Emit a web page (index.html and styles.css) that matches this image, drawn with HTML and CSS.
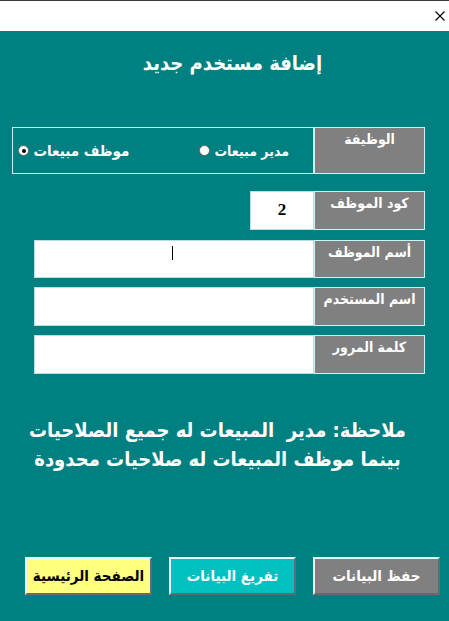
FILE: index.html
```html
<!DOCTYPE html>
<html lang="ar" dir="rtl">
<head>
<meta charset="utf-8">
<title>إضافة مستخدم جديد</title>
<link rel="stylesheet" href="styles.css">
</head>
<body>
<div class="titlebar">
  <svg class="close" width="12" height="12" viewBox="0 0 12 12"><path d="M1.5 1.5 L10.5 10.5 M10.5 1.5 L1.5 10.5" stroke="#000" stroke-width="1.2" fill="none"/></svg>
</div>
<main class="panel">
  <h1 class="title">إضافة مستخدم جديد</h1>
  <div class="rows">
    <div class="row row-role">
      <div class="label">الوظيفة</div>
      <div class="radios">
        <label class="radio"><span class="dot"></span>مدير مبيعات</label>
        <label class="radio radio-2"><span class="dot checked"></span>موظف مبيعات</label>
      </div>
    </div>
    <div class="row row-code">
      <div class="label">كود الموظف</div>
      <div class="field field-code">2</div>
    </div>
    <div class="row row-name">
      <div class="label">أسم الموظف</div>
      <div class="field field-wide"><span class="caret"></span></div>
    </div>
    <div class="row row-user">
      <div class="label">اسم المستخدم</div>
      <div class="field field-wide"></div>
    </div>
    <div class="row row-pass">
      <div class="label">كلمة المرور</div>
      <div class="field field-wide"></div>
    </div>
  </div>
  <p class="note">ملاحظة: مدير&nbsp; المبيعات له جميع الصلاحيات<br>بينما موظف المبيعات له صلاحيات محدودة</p>
  <div class="buttons">
    <div class="btn btn-save">حفظ البيانات</div>
    <div class="btn btn-clear">تفريغ البيانات</div>
    <div class="btn btn-home">الصفحة الرئيسية</div>
  </div>
</main>
</body>
</html>
```

FILE: styles.css
```css
html, body {
  margin: 0;
  padding: 0;
}
body {
  width: 449px;
  height: 621px;
  overflow: hidden;
  font-family: "DejaVu Sans Condensed", "DejaVu Sans", sans-serif;
  background: #008080;
}
.titlebar {
  height: 30px;
  background: #fff;
  border-top: 1px solid #3a3a3a;
  display: flex;
  align-items: center;
  padding-right: 3px;
}
.close {
  display: block;
}
.panel {
  padding: 17px 24px 0 24px;
  color: #fff;
}
.title {
  margin: 0;
  font-size: 20px;
  line-height: 30px;
  font-weight: bold;
  text-align: center;
  padding-left: 16px;
  white-space: nowrap;
}
.rows {
  margin-top: 49px;
  display: flex;
  flex-direction: column;
}
.row {
  display: flex;
}
.label {
  width: 111px;
  background: #808080;
  border: 1px solid #c8f4f4;
  font-size: 14px;
  font-weight: bold;
  text-align: center;
  padding-top: 3px;
  box-sizing: border-box;
  white-space: nowrap;
}
.row-role { height: 47px; margin-bottom: 17px; }
.row-code { height: 39px; margin-bottom: 10px; }
.row-name { height: 38px; margin-bottom: 9px; }
.row-user { height: 39px; margin-bottom: 9px; }
.row-pass { height: 39px; }
.radios {
  width: 302px;
  border: 1px solid #c8f4f4;
  box-sizing: border-box;
  display: flex;
  align-items: center;
  padding-right: 24px;
  gap: 70px;
  margin-left: -14px;
}
.radio {
  display: flex;
  align-items: center;
  gap: 4px;
  font-size: 14px;
  font-weight: bold;
  white-space: nowrap;
}
.radio-2 {
  font-size: 15px;
}
.dot {
  order: 2;
  width: 11px;
  height: 11px;
  border-radius: 50%;
  background: #fff;
  border: 1px solid #666;
  box-sizing: border-box;
  display: flex;
  align-items: center;
  justify-content: center;
}
.dot.checked::after {
  content: "";
  width: 4px;
  height: 4px;
  border-radius: 50%;
  background: #000;
}
.field {
  background: #fff;
  border: 1px solid #b8dce8;
  box-sizing: border-box;
  color: #000;
}
.field-code {
  width: 64px;
  font-family: "Liberation Serif", serif;
  font-weight: bold;
  font-size: 17px;
  text-align: center;
  padding-top: 8px;
}
.field-wide {
  width: 280px;
  text-align: center;
  padding-top: 4px;
}
.caret {
  display: inline-block;
  width: 1px;
  height: 14px;
  background: #000;
  margin-right: 4px;
}
.note {
  margin: 42px 0 0 -14px;
  font-size: 20px;
  line-height: 29px;
  font-weight: bold;
  text-align: center;
  white-space: nowrap;
}
.buttons {
  margin: 83px -15px 0 0;
  display: flex;
  gap: 17px;
}
.btn {
  width: 127px;
  height: 38px;
  box-sizing: border-box;
  display: flex;
  align-items: center;
  justify-content: center;
  font-size: 15px;
  font-weight: bold;
  border: 2px solid;
  border-color: #e8f8f8 #5a7070 #5a7070 #e8f8f8;
  white-space: nowrap;
}
.btn-save {
  background: #808080;
  color: #fff;
}
.btn-clear {
  background: #00c0c0;
  color: #fff;
}
.btn-home {
  background: #ffff80;
  color: #000;
}
```
